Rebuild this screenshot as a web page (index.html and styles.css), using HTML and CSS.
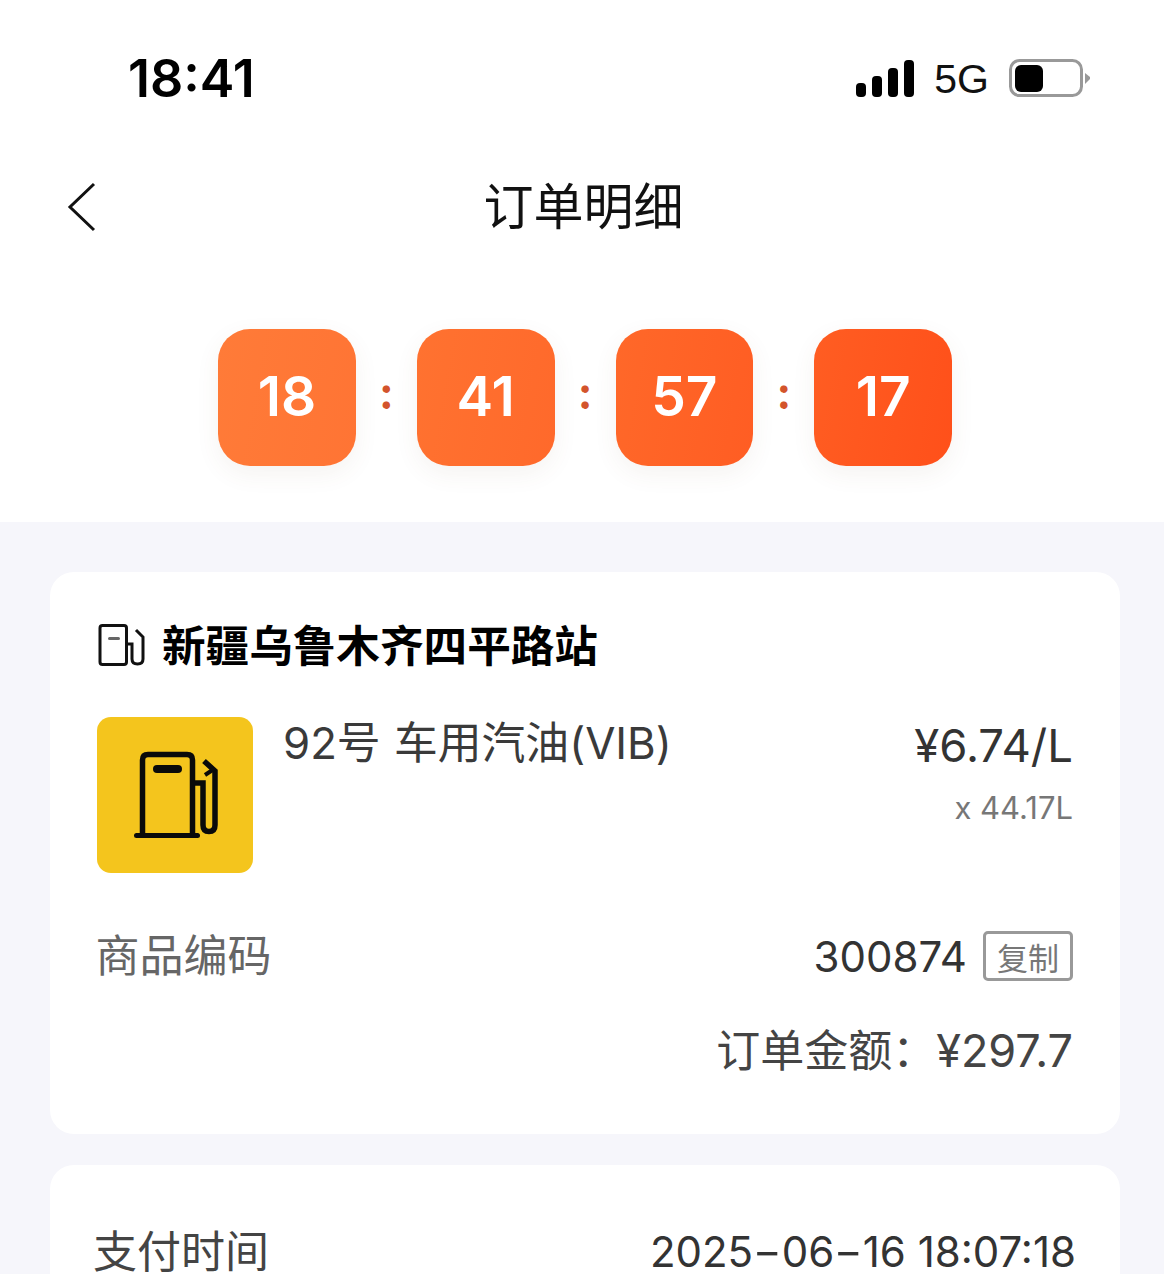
FILE: index.html
```html
<!DOCTYPE html>
<html lang="zh">
<head>
<meta charset="utf-8">
<title>订单明细</title>
<link rel="stylesheet" href="styles.css">
</head>
<body>
<div class="page">
  <header class="top">
    <div class="status">
      <span class="time">18:41</span>
      <div class="status-right">
        <svg class="signal" width="58" height="38" viewBox="0 0 58 38"><g fill="#000"><rect x="0" y="24" width="10" height="14" rx="4"/><rect x="16" y="17" width="10" height="21" rx="4"/><rect x="32" y="9" width="10" height="29" rx="4"/><rect x="48" y="1" width="10" height="37" rx="4"/></g></svg>
        <span class="net">5G</span>
        <svg class="battery" width="82" height="38" viewBox="0 0 82 38"><rect x="1.5" y="1.500" width="71" height="35" rx="9" fill="none" stroke="#999" stroke-width="3"/><rect x="6" y="6" width="28" height="27" rx="6" fill="#000"/><path d="M76 14 L81 18 V20 L76 25 Z" fill="#999"/></svg>
      </div>
    </div>
    <div class="nav">
      <svg class="back" width="30" height="50" viewBox="0 0 30 50"><path d="M27 2 L3 25 L27 48" fill="none" stroke="#111" stroke-width="3"/></svg>
      <h1 class="title">订单明细</h1>
    </div>
    <div class="timer">
      <span class="box box-1">18</span><span class="colon">:</span>
      <span class="box box-2">41</span><span class="colon">:</span>
      <span class="box box-3">57</span><span class="colon">:</span>
      <span class="box box-4">17</span>
    </div>
  </header>
  <main class="content">
    <section class="card order">
      <div class="station">
        <svg width="48" height="46" viewBox="0 0 48 46"><g fill="none" stroke="#111" stroke-width="3"><rect x="3" y="3.500" width="26.500" height="39" rx="2.500"/><path d="M39 8 L46 15 V37 Q46 42 40.500 42 Q35 42 35 37 V22 H30"/></g><rect x="11" y="15" width="12" height="3" rx="1.500" fill="#666"/></svg>
        <span class="station-name">新疆乌鲁木齐四平路站</span>
      </div>
      <div class="product">
        <div class="thumb">
          <svg width="156" height="156" viewBox="0 0 156 156"><g fill="none" stroke="#0a0a0a" stroke-width="5.500"><path d="M45.500 118 V43 Q45.500 37.500 51 37.500 H90 Q95.500 37.500 95.500 43 V118"/><path d="M96 66 H106 V108 Q106 114.500 112 114.500 Q118 114.500 118 108 V54 L107 44"/><path d="M108 58 L117 52" stroke-width="4"/></g><rect x="37" y="116" width="66" height="5" rx="2.500" fill="#0a0a0a"/><rect x="56" y="48" width="29" height="8" rx="4" fill="#0a0a0a"/></svg>
        </div>
        <div class="product-name">92号 车用汽油(VIB)</div>
        <div class="product-price">
          <div class="price">¥6.74/L</div>
          <div class="qty">x 44.17L</div>
        </div>
      </div>
      <div class="row code-row">
        <span class="label">商品编码</span>
        <span class="code"><span class="value">300874</span><span class="copy">复制</span></span>
      </div>
      <div class="amount">订单金额：<span class="amount-num">¥297.7</span></div>
    </section>
    <section class="card pay">
      <div class="row pay-row">
        <span class="label dark">支付时间</span>
        <span class="value">2025<span class="dash">-</span>06<span class="dash">-</span>16 18:07:18</span>
      </div>
    </section>
  </main>
</div>
</body>
</html>
```
FILE: styles.css
```css
* { box-sizing: border-box; }
html, body { margin: 0; padding: 0; }
body {
  width: 1164px;
  height: 1274px;
  overflow: hidden;
  background: #f6f6fb;
  font-family: Inter, "Noto Sans CJK SC", sans-serif;
}
.page { display: flex; flex-direction: column; }
.top { background: #fff; height: 522px; display: flex; flex-direction: column; }
.status {
  height: 156px;
  padding: 0 73px 0 128px;
  display: flex;
  justify-content: space-between;
  align-items: center;
}
.time { font-size: 52px; font-weight: 600; color: #000; letter-spacing: 0; }
.status-right { display: flex; align-items: center; gap: 20px; }
.net { font-family: "Liberation Sans", sans-serif; font-size: 41px; color: #111; padding-top: 2px; }
.nav { position: relative; height: 102px; display: flex; align-items: center; justify-content: center; }
.back { position: absolute; left: 67px; top: 26px; }
.title { margin: 0 0 0 3px; font-size: 50px; font-weight: 400; color: #111; line-height: 1; }
.timer {
  margin-top: 71px;
  padding-left: 6px;
  display: flex;
  justify-content: center;
  align-items: center;
}
.box {
  width: 137.75px;
  height: 137px;
  padding-bottom: 3px;
  border-radius: 32px;
  color: #fff;
  font-size: 55px;
  font-weight: 600;
  display: flex;
  align-items: center;
  justify-content: center;
  box-shadow: 0 8px 24px rgba(120, 80, 60, 0.07);
}
.box-1 { background: linear-gradient(100deg, #ff7b38, #ff7434); }
.box-2 { background: linear-gradient(100deg, #ff7230, #ff692b); }
.box-3 { background: linear-gradient(100deg, #ff6829, #ff5d23); }
.box-4 { background: linear-gradient(100deg, #ff5d22, #ff501a); }
.colon {
  width: 61px;
  text-align: center;
  color: #d3542c;
  font-size: 44px;
  font-weight: 700;
  line-height: 1;
  margin-top: -10px;
}
.content { padding: 50px 44px 0 50px; display: flex; flex-direction: column; gap: 31px; }
.card { background: #fff; border-radius: 24px; padding: 0 47px; }
.order { height: 562px; padding-top: 50px; }
.station { display: flex; align-items: center; gap: 17px; height: 46px; }
.station-name { font-size: 43.6px; font-weight: 700; color: #000; line-height: 1; padding-top: 3px; }
.product { display: flex; margin-top: 49px; height: 156px; }
.thumb {
  width: 156px;
  height: 156px;
  border-radius: 14px;
  background: #f4c51d;
  display: flex;
  flex: none;
}
.product-name { margin-left: 30px; font-size: 43.8px; word-spacing: 1px; color: #3a3a3a; line-height: 54px; flex: 1; }
.product-price { text-align: right; }
.price { font-size: 45.5px; color: #333; line-height: 58px; }
.qty { font-size: 31px; color: #777; line-height: 40px; margin-top: 13px; }
.row { display: flex; justify-content: space-between; align-items: center; }
.code-row { margin-top: 58px; height: 50px; }
.label { font-size: 44px; color: #666; margin: 0 0 6px -1.5px; }
.label.dark { color: #444; margin: 0; }
.value { font-size: 42px; color: #333; }
.dash { display: inline-block; width: 28.5px; text-align: center; transform: scaleX(1.5); }
.code { display: flex; align-items: center; gap: 16px; }
.copy {
  width: 90px;
  height: 50px;
  border: 3px solid #999;
  border-radius: 5px;
  font-size: 31px;
  color: #777;
  display: flex;
  align-items: center;
  justify-content: center;
}
.amount { margin-top: 43px; text-align: right; font-size: 44px; color: #444; line-height: 54px; }
.amount-num { font-size: 45px; }
.pay { height: 109px; padding: 65px 44px 0 43px; border-radius: 24px 24px 0 0; }
.pay-row { height: 44px; line-height: 44px; }
```
